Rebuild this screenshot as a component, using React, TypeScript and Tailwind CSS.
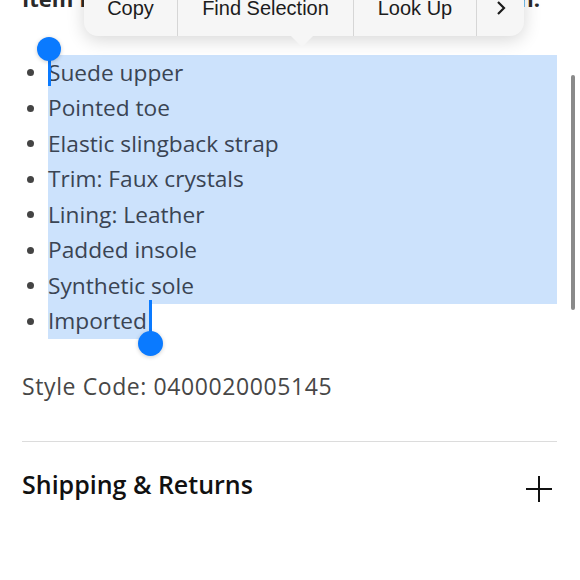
import React from "react";

const features = [
  "Suede upper",
  "Pointed toe",
  "Elastic slingback strap",
  "Trim: Faux crystals",
  "Lining: Leather",
  "Padded insole",
  "Synthetic sole",
];

export default function App() {
  return (
    <div className="relative w-[580px] h-[580px] overflow-hidden bg-white" style={{ fontFamily: "'Open Sans', 'Noto Sans', sans-serif" }}>
      <div className="pl-[22px] pr-[23px]">
        {/* header partly hidden above the fold */}
        <div className="-mt-[16px] h-[28px] flex justify-between items-center text-[22px] font-bold text-[#2a2a2a] leading-[28px]">
          <span>Item Details</span>
          <span className="mr-[17px]">in.</span>
        </div>

        <ul className="mt-[43px] text-[22.7px] text-[#3a4453]">
          {features.map((f) => (
            <li key={f} className="flex h-[35.5px]">
              <span className="w-[26px] flex items-center">
                <span className="ml-[5px] w-[7px] h-[7px] rounded-full bg-[#444]" />
              </span>
              <span className="flex-1 flex items-center bg-[#cce2fc]">{f}</span>
            </li>
          ))}
          <li className="flex h-[35.5px]">
            <span className="w-[26px] flex items-center">
              <span className="ml-[5px] w-[7px] h-[7px] rounded-full bg-[#444]" />
            </span>
            <span className="w-[102px] flex items-center bg-[#cce2fc]">Imported</span>
          </li>
        </ul>

        <p className="mt-[32px] text-[23px] tracking-[0.6px] leading-[30px] text-[#474747]">Style Code: 0400020005145</p>

        <div className="mt-[40px] h-px bg-[#dcdcdc]" />

        <div className="mt-[24px] flex items-center justify-between">
          <h2 className="text-[25px] leading-[32px] font-semibold text-[#111]">Shipping &amp; Returns</h2>
          <svg width="26" height="26" viewBox="0 0 26 26" className="mr-[5px] mt-[10px]">
            <path d="M13 0v26M0 13h26" stroke="#111" strokeWidth="2" />
          </svg>
        </div>
      </div>

      {/* scrollbar */}
      <div className="absolute left-[571px] top-[75px] w-[4px] h-[235px] rounded-full bg-[#8a8a8a]" />

      {/* selection handles */}
      <div className="absolute left-[48px] top-[49px] w-[3px] h-[37px] bg-[#0a7aff]" />
      <div className="absolute left-[37px] top-[37px] w-[24px] h-[24px] rounded-full bg-[#0a7aff] shadow-[0_1px_4px_rgba(0,0,0,0.2)]" />
      <div className="absolute left-[149px] top-[300px] w-[3px] h-[40px] bg-[#0a7aff]" />
      <div className="absolute left-[138px] top-[331px] w-[25px] h-[25px] rounded-full bg-[#0a7aff] shadow-[0_1px_4px_rgba(0,0,0,0.2)]" />

      {/* edit menu */}
      <div
        className="absolute left-[84px] top-[-20px] w-[440px] h-[56px] rounded-[14px] bg-[#f6f6f6] shadow-[0_4px_18px_rgba(0,0,0,0.16)] flex text-[20px] text-[#1c1c1c]"
        style={{ fontFamily: "'Liberation Sans', Arial, sans-serif" }}
      >
        <div className="w-[94px] flex items-center justify-center border-r border-[#d6d6d6]">Copy</div>
        <div className="w-[176px] flex items-center justify-center border-r border-[#d6d6d6]">Find Selection</div>
        <div className="w-[123px] flex items-center justify-center border-r border-[#d6d6d6]">Look Up</div>
        <div className="flex-1 flex items-center justify-center">
          <svg width="12" height="16" viewBox="0 0 12 16">
            <path d="M3 2l6 6-6 6" fill="none" stroke="#1c1c1c" strokeWidth="2.2" />
          </svg>
        </div>
      </div>
      <svg className="absolute left-[290px] top-[35px]" width="24" height="12" viewBox="0 0 24 12">
        <path d="M0 0h24L13.5 10.5a2 2 0 0 1-3 0z" fill="#f6f6f6" />
      </svg>
    </div>
  );
}
